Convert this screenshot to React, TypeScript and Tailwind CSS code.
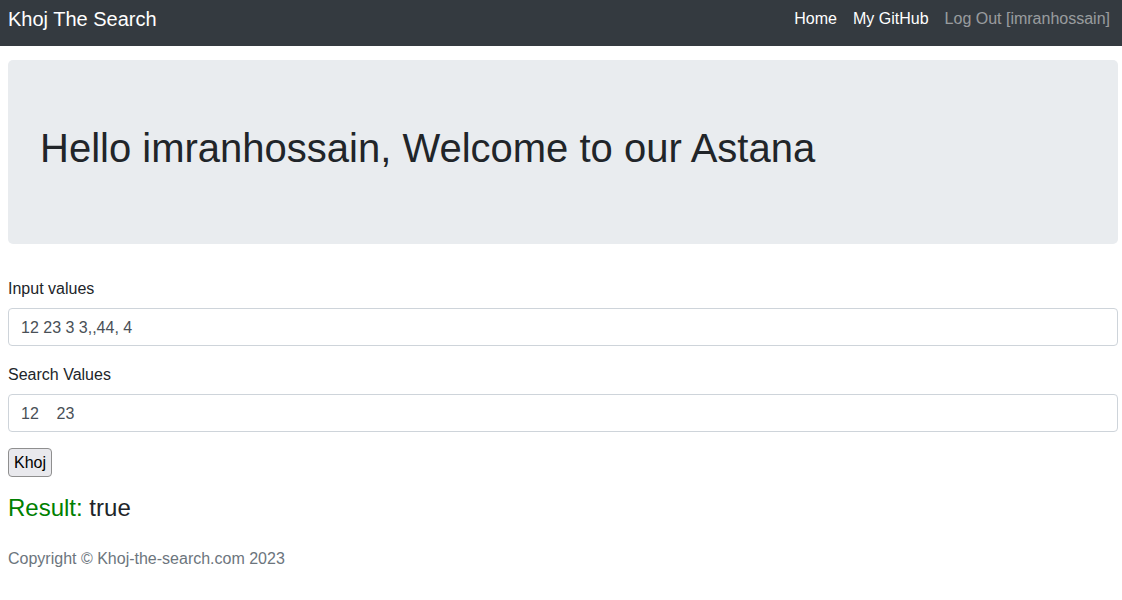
import React from 'react';

const App: React.FC = () => {
  return (
    <div className="min-h-[600px] bg-white text-[#212529] font-['Liberation_Sans',Arial,sans-serif] text-base leading-6">
      <nav className="h-[46px] bg-[#343a40] flex items-start justify-between pl-2 pr-1 pt-[4px]">
        <a href="#" className="text-white text-xl leading-[30px]">
          Khoj The Search
        </a>
        <ul className="flex leading-[30px]">
          <li>
            <a href="#" className="block px-2 text-white">Home</a>
          </li>
          <li>
            <a href="#" className="block px-2 text-white">My GitHub</a>
          </li>
          <li>
            <a href="#" className="block px-2 text-white/50">Log Out [imranhossain]</a>
          </li>
        </ul>
      </nav>

      <main className="pl-2 pr-1 pt-[14px]">
        <div className="bg-[#e9ecef] rounded-[5px] px-8 pt-16 pb-16">
          <h1 className="text-[40px] leading-[48px] mb-2">
            Hello imranhossain, Welcome to our Astana
          </h1>
        </div>

        <form className="mt-8" onSubmit={(e) => e.preventDefault()}>
          <div className="mb-4">
            <label className="block pt-[1px] mb-[7px]">Input values</label>
            <input
              readOnly
              defaultValue="12 23 3 3,,44, 4"
              className="block w-full h-[38px] px-3 pt-[2px] border border-[#ced4da] rounded text-[#495057] outline-none"
            />
          </div>
          <div className="mb-4">
            <label className="block pt-[1px] mb-[7px]">Search Values</label>
            <input
              readOnly
              defaultValue="12    23"
              className="block w-full h-[38px] px-3 pt-[2px] border border-[#ced4da] rounded text-[#495057] outline-none"
            />
          </div>
          <button
            type="submit"
            className="h-[29px] px-[5px] bg-[#e9e9ed] border border-[#8f8f8f] rounded-[4px] text-black leading-[27px]"
          >
            Khoj
          </button>
        </form>

        <h4 className="text-2xl leading-[29px] mt-[16px]">
          <span className="text-[#008000]">Result:</span> true
        </h4>

        <footer className="mt-[25px] text-[#6c757d]">
          Copyright © Khoj-the-search.com 2023
        </footer>
      </main>
    </div>
  );
};

export default App;
